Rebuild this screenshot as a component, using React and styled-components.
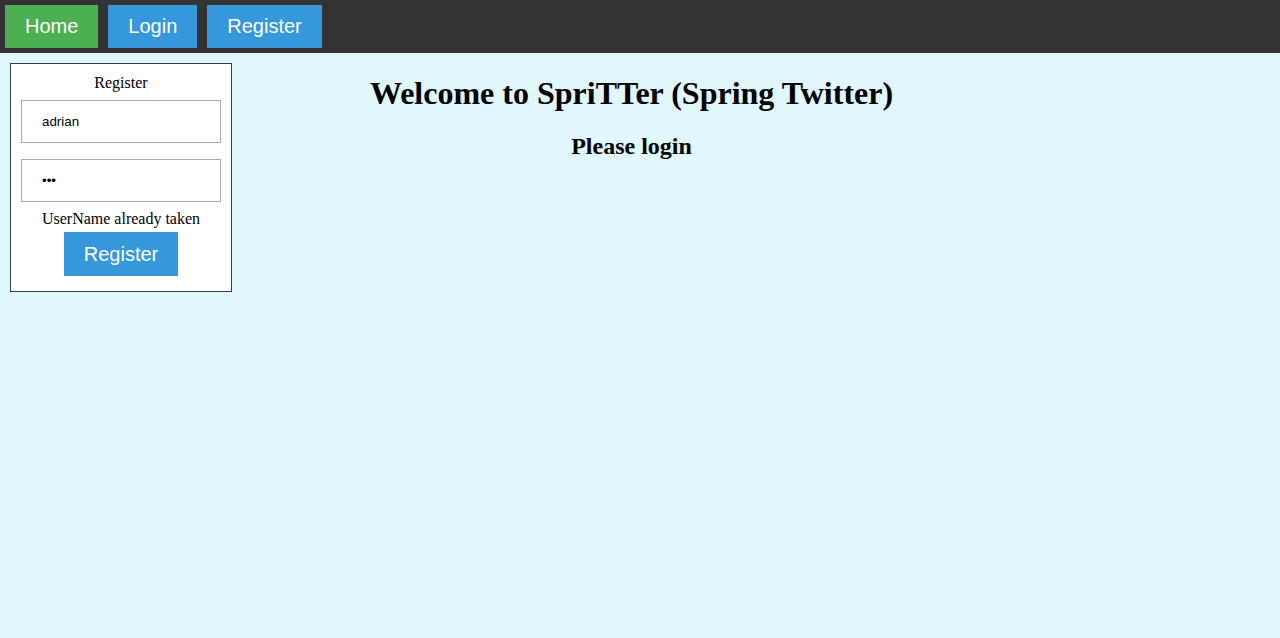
import styled, { createGlobalStyle } from 'styled-components';

const GlobalStyle = createGlobalStyle`
  html, body {
    margin: 0;
    padding: 0;
  }
  body {
    min-height: 100vh;
    background-color: #e0f7fb;
    font-family: "Liberation Serif", "Times New Roman", serif;
    color: #000000;
  }
`;

const Nav = styled.nav`
  display: flex;
  gap: 10px;
  height: 53px;
  padding: 5px;
  box-sizing: border-box;
  background-color: #333333;
`;

const NavButton = styled.a`
  display: flex;
  align-items: center;
  height: 43px;
  padding: 0 20px;
  font-family: "Liberation Sans", Arial, sans-serif;
  font-size: 20px;
  color: #ffffff;
  text-decoration: none;
  background-color: ${(p) => (p.$active ? '#4caf50' : '#3498db')};
`;

/* right padding stands in for the 17px scrollbar of the original page */
const Main = styled.main`
  display: grid;
  grid-template-columns: 1fr auto 1fr;
  align-items: start;
  padding-right: 17px;
`;

const Panel = styled.form`
  justify-self: start;
  display: flex;
  flex-direction: column;
  align-items: center;
  width: 200px;
  margin: 10px 0 0 10px;
  padding: 10px 10px 11px;
  background-color: #ffffff;
  border: 1px solid #2c3e50;
`;

const PanelTitle = styled.div`
  font-size: 16px;
  line-height: 18px;
`;

const Input = styled.input`
  box-sizing: border-box;
  width: 200px;
  height: 43px;
  margin: 8px 0;
  padding: 0 20px;
  border: 1px solid #aaaaaa;
  font-family: "Liberation Sans", Arial, sans-serif;
  font-size: 13.33px;
  color: #000000;
  outline: none;
`;

const Error = styled.div`
  font-size: 16px;
  line-height: 18px;
`;

const SubmitButton = styled.button`
  height: 44px;
  margin: 4px 0;
  padding: 0 20px;
  border: none;
  background-color: #3498db;
  color: #ffffff;
  font-family: "Liberation Sans", Arial, sans-serif;
  font-size: 20px;
  cursor: pointer;
`;

const Content = styled.section`
  text-align: center;
`;

const Title = styled.h1`
  margin: 22px 0 21px;
  font-size: 32px;
  font-weight: bold;
`;

const Subtitle = styled.h2`
  margin: 21px 0;
  font-size: 24px;
  font-weight: bold;
`;

export default function App() {
  return (
    <>
      <GlobalStyle />
      <Nav>
        <NavButton $active href="#">Home</NavButton>
        <NavButton href="#">Login</NavButton>
        <NavButton href="#">Register</NavButton>
      </Nav>
      <Main>
        <Panel onSubmit={(e) => e.preventDefault()}>
          <PanelTitle>Register</PanelTitle>
          <Input type="text" defaultValue="adrian" />
          <Input type="password" defaultValue="abc" />
          <Error>UserName already taken</Error>
          <SubmitButton type="submit">Register</SubmitButton>
        </Panel>
        <Content>
          <Title>Welcome to SpriTTer (Spring Twitter)</Title>
          <Subtitle>Please login</Subtitle>
        </Content>
      </Main>
    </>
  );
}
